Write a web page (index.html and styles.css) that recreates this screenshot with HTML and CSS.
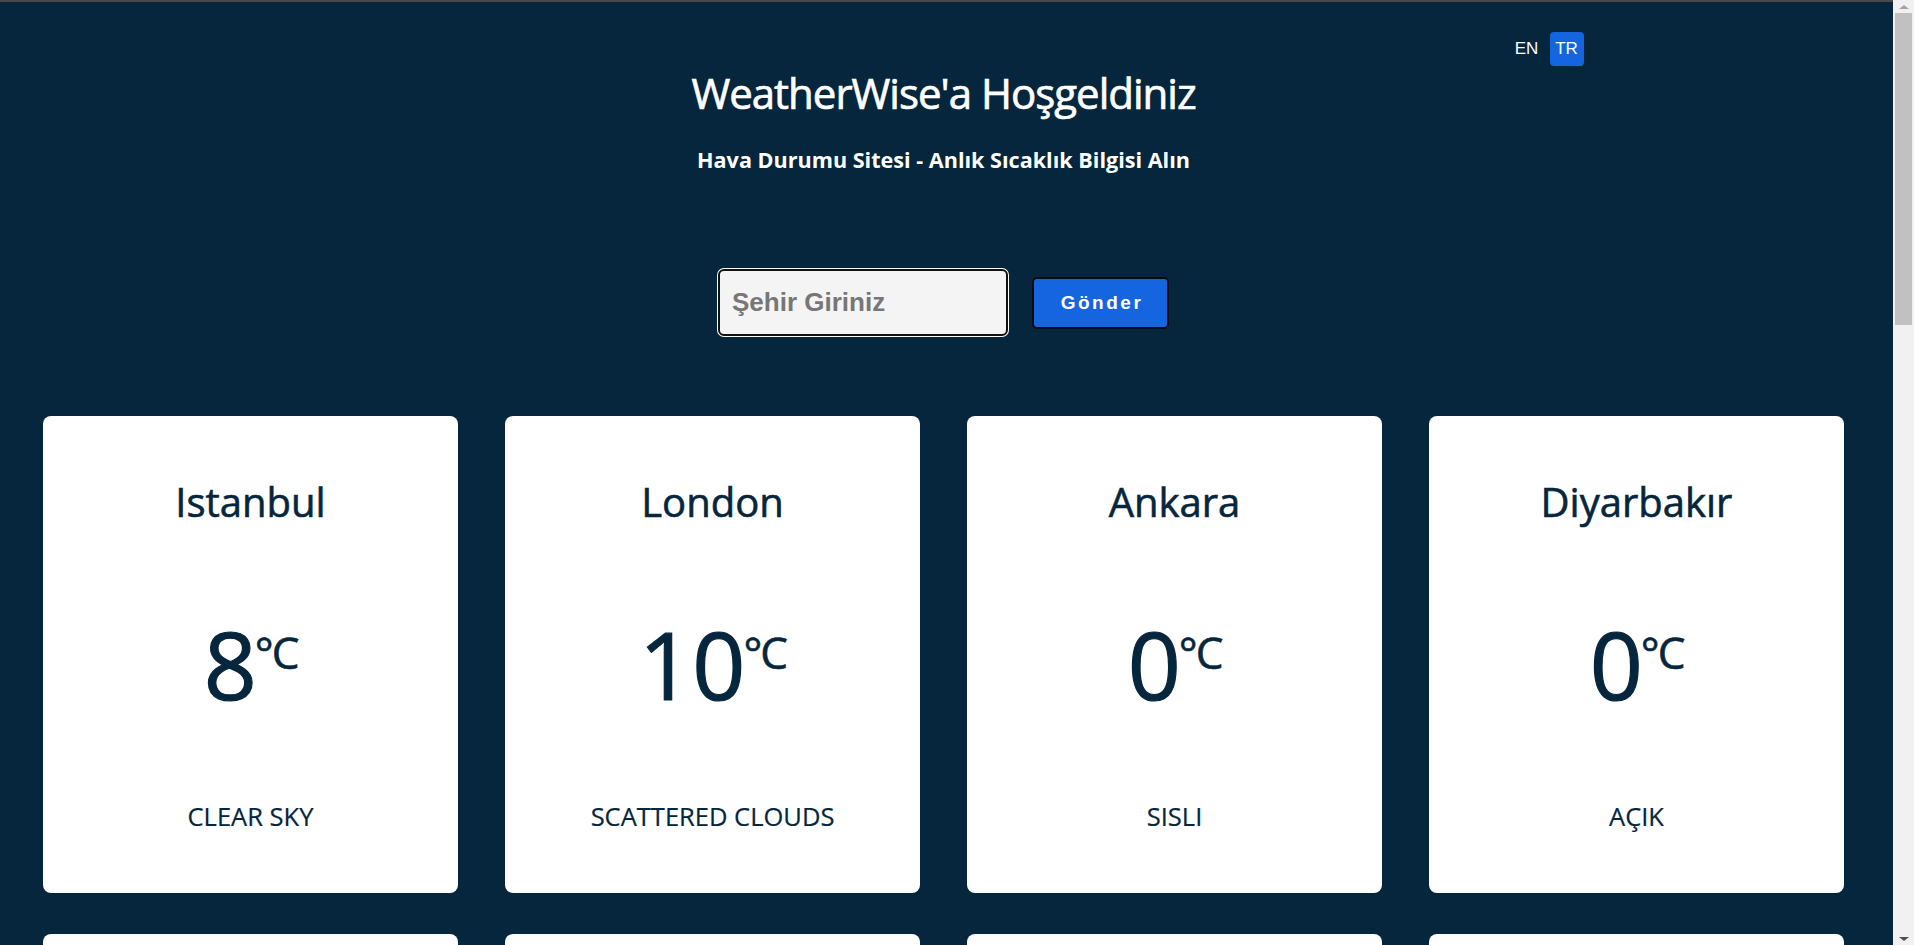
FILE: index.html
```html
<!DOCTYPE html>
<html lang="en">
<head>
<meta charset="utf-8">
<title>WeatherWise</title>
<link rel="stylesheet" href="styles.css">
</head>
<body>
<div class="page">
  <header class="header">
    <div class="lang">
      <button class="lang-btn" type="button">EN</button>
      <button class="lang-btn active" type="button">TR</button>
    </div>
    <h1 class="title">WeatherWise'a Hoşgeldiniz</h1>
    <p class="subtitle">Hava Durumu Sitesi - Anlık Sıcaklık Bilgisi Alın</p>
  </header>

  <form class="search" onsubmit="return false;">
    <input class="search-input" type="text" placeholder="Şehir Giriniz">
    <button class="search-btn" type="submit">Gönder</button>
  </form>

  <main class="cards">
    <div class="card"><h2 class="city">Istanbul</h2><div class="temp"><span class="num">8</span><span class="unit">°C</span></div><p class="desc">CLEAR SKY</p></div>
    <div class="card"><h2 class="city">London</h2><div class="temp"><span class="num">10</span><span class="unit">°C</span></div><p class="desc">SCATTERED CLOUDS</p></div>
    <div class="card"><h2 class="city">Ankara</h2><div class="temp"><span class="num">0</span><span class="unit">°C</span></div><p class="desc">SISLI</p></div>
    <div class="card"><h2 class="city">Diyarbakır</h2><div class="temp"><span class="num">0</span><span class="unit">°C</span></div><p class="desc">AÇIK</p></div>
    <div class="card"><h2 class="city">Izmir</h2><div class="temp"><span class="num">12</span><span class="unit">°C</span></div><p class="desc">PARÇALI BULUTLU</p></div>
    <div class="card"><h2 class="city">Paris</h2><div class="temp"><span class="num">7</span><span class="unit">°C</span></div><p class="desc">LIGHT RAIN</p></div>
    <div class="card"><h2 class="city">Berlin</h2><div class="temp"><span class="num">3</span><span class="unit">°C</span></div><p class="desc">OVERCAST CLOUDS</p></div>
    <div class="card"><h2 class="city">Antalya</h2><div class="temp"><span class="num">15</span><span class="unit">°C</span></div><p class="desc">AÇIK</p></div>
    <div class="card"><h2 class="city">Bursa</h2><div class="temp"><span class="num">6</span><span class="unit">°C</span></div><p class="desc">BULUTLU</p></div>
    <div class="card"><h2 class="city">Madrid</h2><div class="temp"><span class="num">11</span><span class="unit">°C</span></div><p class="desc">FEW CLOUDS</p></div>
    <div class="card"><h2 class="city">Rome</h2><div class="temp"><span class="num">13</span><span class="unit">°C</span></div><p class="desc">CLEAR SKY</p></div>
    <div class="card"><h2 class="city">Trabzon</h2><div class="temp"><span class="num">9</span><span class="unit">°C</span></div><p class="desc">HAFIF YAĞMUR</p></div>
    <div class="card"><h2 class="city">Konya</h2><div class="temp"><span class="num">-2</span><span class="unit">°C</span></div><p class="desc">SISLI</p></div>
    <div class="card"><h2 class="city">Tokyo</h2><div class="temp"><span class="num">5</span><span class="unit">°C</span></div><p class="desc">CLEAR SKY</p></div>
    <div class="card"><h2 class="city">New York</h2><div class="temp"><span class="num">4</span><span class="unit">°C</span></div><p class="desc">BROKEN CLOUDS</p></div>
    <div class="card"><h2 class="city">Erzurum</h2><div class="temp"><span class="num">-8</span><span class="unit">°C</span></div><p class="desc">KAR YAĞIŞLI</p></div>
  </main>
</div>
<div class="scrollbar" aria-hidden="true">
  <span class="sb-up"></span>
  <span class="sb-thumb"></span>
  <span class="sb-down"></span>
</div>
</body>
</html>
```

FILE: styles.css
```css
html {
  background: #05263c;
}

body {
  margin: 0;
  border-top: 2px solid #4a4a4a;
  background: #05263c;
  font-family: "Open Sans", "Liberation Sans", sans-serif;
  color: #ffffff;
}

.page {
  padding: 0 27px 336px 0;
}

/* decorative scrollbar drawn over the right edge */
.scrollbar {
  position: fixed;
  top: 0;
  right: 0;
  width: 21px;
  height: 100vh;
  background: #f1f1f1;
  display: flex;
  flex-direction: column;
  align-items: center;
}

.sb-up {
  margin-top: 5px;
  width: 0;
  height: 0;
  border-left: 5px solid transparent;
  border-right: 5px solid transparent;
  border-bottom: 4px solid #a3a3a3;
}

.sb-thumb {
  margin-top: 4px;
  width: 17px;
  height: 312px;
  background: #c1c1c1;
}

.sb-down {
  margin-top: auto;
  margin-bottom: 4px;
  width: 0;
  height: 0;
  border-left: 5px solid transparent;
  border-right: 5px solid transparent;
  border-top: 4px solid #505050;
}

.header {
  max-width: 1280px;
  margin: 0 auto;
  padding-top: 30px;
  text-align: center;
}

.lang {
  display: flex;
  justify-content: flex-end;
  gap: 6px;
  height: 34px;
}

.lang-btn {
  width: 34px;
  height: 34px;
  padding: 0;
  border: none;
  border-radius: 4px;
  background: transparent;
  color: #ffffff;
  font-family: "Liberation Sans", Arial, sans-serif;
  font-size: 17px;
  cursor: pointer;
}

.lang-btn.active {
  background: #1565e0;
}

.title {
  margin: -2px 0 0;
  font-size: 42px;
  font-weight: 400;
  letter-spacing: -1px;
  line-height: normal;
  -webkit-text-stroke: 0.7px currentColor;
}

.subtitle {
  margin: 24px 0 0;
  font-size: 21.6px;
  font-weight: 700;
  line-height: normal;
}

.search {
  display: flex;
  justify-content: center;
  align-items: center;
  gap: 24px;
  margin-top: 95px;
}

.search-input {
  box-sizing: border-box;
  width: 290px;
  height: 67px;
  padding: 0 12px;
  border: 2px solid #111111;
  border-radius: 6px;
  box-shadow: 0 0 0 1px #ffffff;
  background: #f4f4f4;
  font-family: "Liberation Sans", Arial, sans-serif;
  font-size: 26px;
  font-weight: 700;
  color: #333333;
  outline: none;
}

.search-input::placeholder {
  color: #777777;
}

.search-btn {
  box-sizing: border-box;
  width: 137px;
  height: 52px;
  padding: 0 0 0 3px;
  border: 2px solid #0b0b0b;
  border-radius: 5px;
  background: #1565e0;
  color: #ffffff;
  font-family: "Liberation Sans", Arial, sans-serif;
  font-size: 19px;
  font-weight: 700;
  letter-spacing: 2.5px;
  cursor: pointer;
}

.cards {
  display: grid;
  grid-template-columns: repeat(4, 415px);
  column-gap: 47px;
  row-gap: 41px;
  justify-content: center;
  margin-top: 80px;
}

.card {
  box-sizing: border-box;
  height: 477px;
  padding: 58px 20px 0;
  border-radius: 8px;
  background: #ffffff;
  color: #06263d;
  text-align: center;
}

.city {
  margin: 0;
  font-size: 40px;
  font-weight: 400;
  line-height: normal;
  -webkit-text-stroke: 0.6px currentColor;
}

.temp {
  display: flex;
  justify-content: center;
  align-items: flex-start;
  margin-top: 72px;
}

.num {
  font-size: 93px;
  font-weight: 400;
  line-height: normal;
  -webkit-text-stroke: 1.2px currentColor;
}

.unit {
  margin-top: 21px;
  margin-left: -2px;
  font-size: 44px;
  font-weight: 400;
  letter-spacing: -2px;
  line-height: normal;
  -webkit-text-stroke: 0.6px currentColor;
}

.desc {
  margin: 72px 0 0;
  font-size: 25.5px;
  line-height: normal;
  -webkit-text-stroke: 0.2px currentColor;
}
```
